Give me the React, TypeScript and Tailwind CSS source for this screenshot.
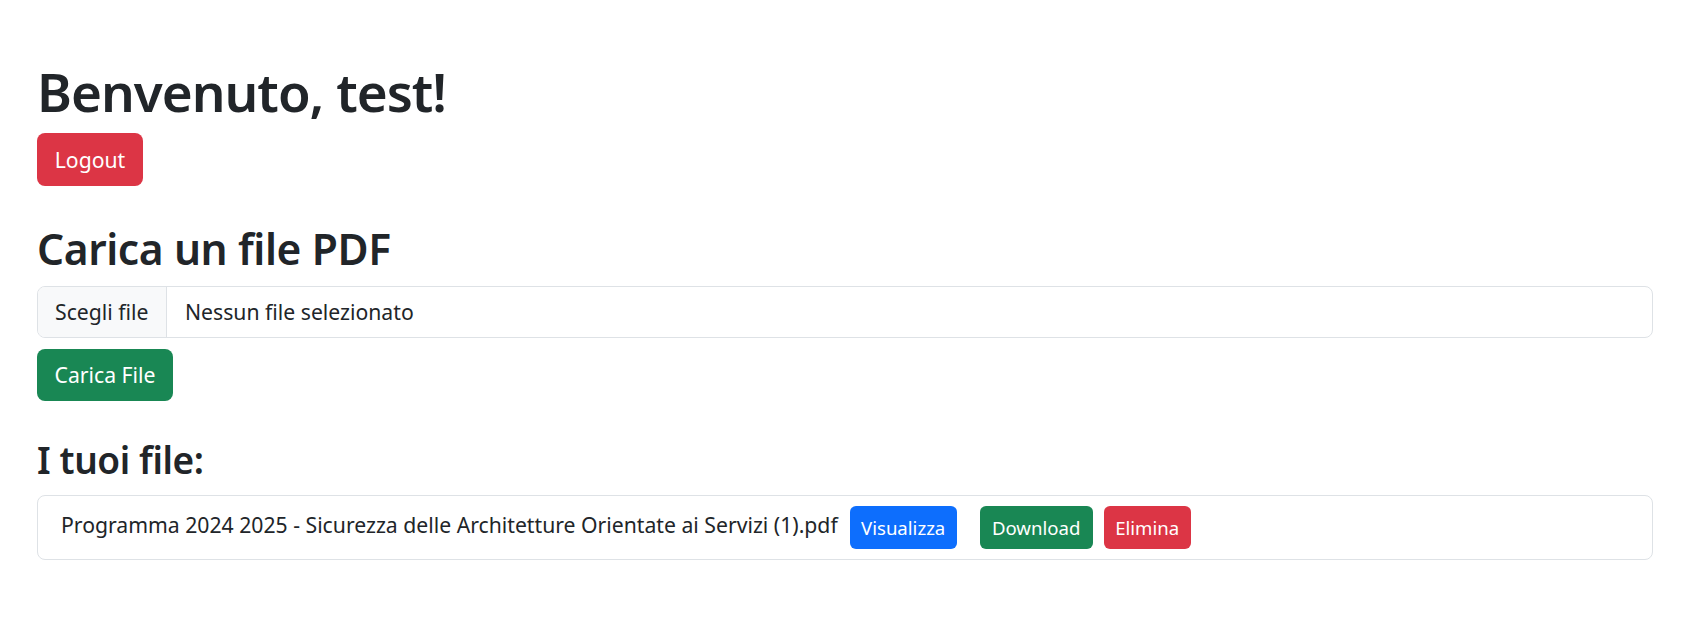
const FONT = "font-['Noto_Sans','Liberation_Sans',sans-serif]";

type FileRow = { id: number; name: string };

const files: FileRow[] = [
  { id: 1, name: "Programma 2024 2025 - Sicurezza delle Architetture Orientate ai Servizi (1).pdf" },
];

export default function App() {
  return (
    <div className={`${FONT} h-[617px] overflow-hidden bg-white pl-[37px] pr-[28px] pt-[58px] text-[#212529]`}>
      <h1 className="text-[53px] font-semibold leading-[67px] tracking-[-1px]">Benvenuto, test!</h1>
      <button className="mt-[8px] h-[53px] w-[106px] rounded-[8px] bg-[#dc3545] text-[21.2px] text-white">
        Logout
      </button>

      <h2 className="mt-[36px] text-[42.5px] font-semibold leading-[54px] tracking-[-0.4px]">
        Carica un file PDF
      </h2>
      <div className="mt-[10px] flex h-[52px] items-stretch overflow-hidden rounded-[8px] border border-[#dee2e6] text-[21.2px]">
        <span className="flex w-[129px] shrink-0 items-center border-r border-[#dee2e6] bg-[#f8f9fa] pl-[17px]">
          Scegli file
        </span>
        <span className="flex items-center pl-[18px]">Nessun file selezionato</span>
      </div>
      <button className="mt-[11px] h-[52px] w-[136px] rounded-[8px] bg-[#198754] text-[21.2px] text-white">
        Carica File
      </button>

      <h3 className="mt-[35px] text-[37px] font-semibold leading-[47px] tracking-[-0.4px]">I tuoi file:</h3>
      <ul className="mt-[12px]">
        {files.map((f) => (
          <li
            key={f.id}
            className="flex h-[65px] items-start rounded-[8px] border border-[#dee2e6] pl-[23px] pt-[10px]"
          >
            <span className="mt-[2px] text-[21.2px] leading-[34px]">{f.name}</span>
            <button className="ml-[12px] h-[43px] w-[107px] rounded-[6px] bg-[#0d6efd] text-[18.6px] text-white">
              Visualizza
            </button>
            <button className="ml-[23px] h-[43px] w-[113px] rounded-[6px] bg-[#198754] text-[18.6px] text-white">
              Download
            </button>
            <button className="ml-[11px] h-[43px] w-[87px] rounded-[6px] bg-[#dc3545] text-[18.6px] text-white">
              Elimina
            </button>
          </li>
        ))}
      </ul>
    </div>
  );
}
